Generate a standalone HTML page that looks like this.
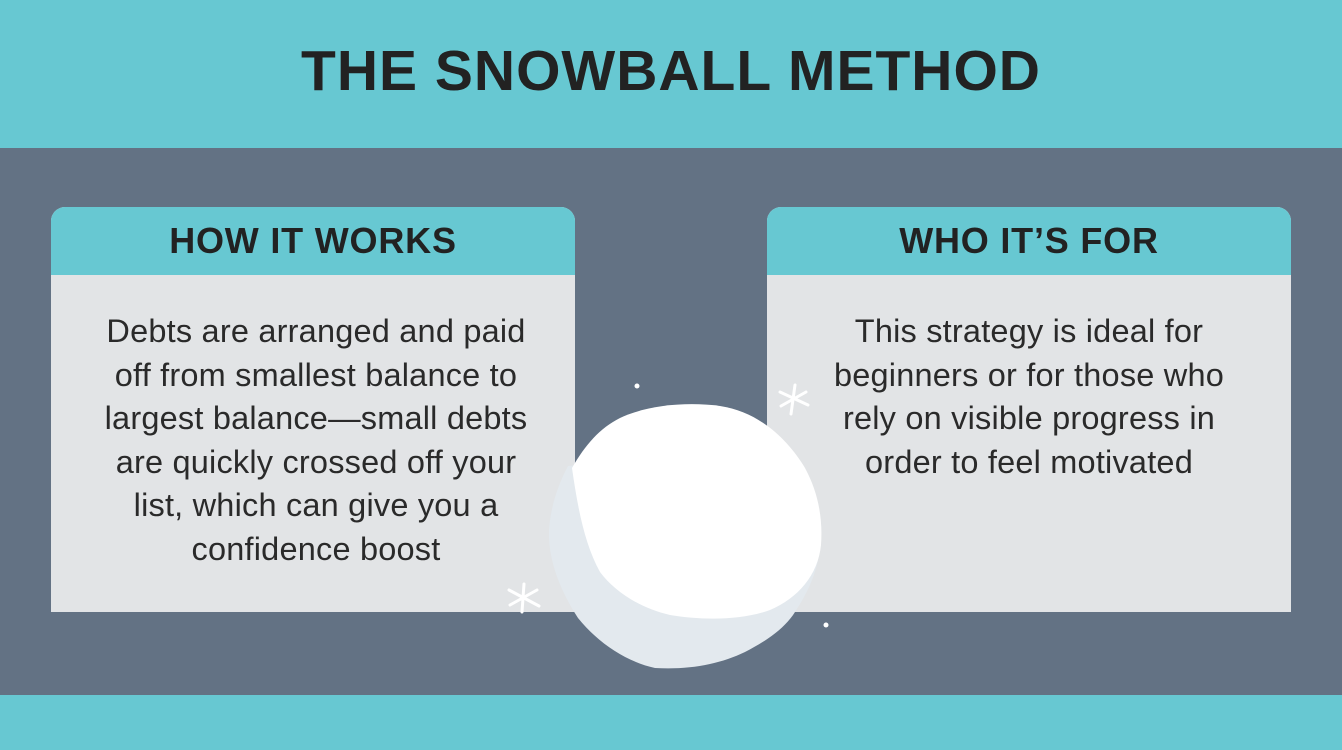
<!DOCTYPE html>
<html><head><meta charset="utf-8"><style>
*{margin:0;padding:0;box-sizing:border-box}
body{width:1342px;height:750px;overflow:hidden;background:#637284;font-family:"Liberation Sans",sans-serif;position:relative;color:#232323}
.top{position:absolute;left:0;top:0;width:1342px;height:148px;background:#67c8d2}
.top h1{position:absolute;left:0;width:1342px;top:38px;text-align:center;font-size:57px;font-weight:bold;letter-spacing:1px;line-height:66px;color:#222}
.bot{position:absolute;left:0;top:695px;width:1342px;height:55px;background:#67c8d2}
.card{position:absolute;top:207px;width:524px;height:405px;background:#e2e4e6;border-radius:14px 14px 0 0;overflow:hidden}
.card .h{height:68px;background:#67c8d2;text-align:center;font-weight:bold;font-size:36px;letter-spacing:0.8px;line-height:68px;color:#222}
.card .b{text-align:center;font-size:32.5px;letter-spacing:0.2px;line-height:43.5px;padding-top:35px;color:#2a2a2a;white-space:nowrap}
</style></head><body>
<div class="top"><h1>THE SNOWBALL METHOD</h1></div>
<div class="card" style="left:51px"><div class="h">HOW IT WORKS</div>
<div class="b" style="padding-left:6px">Debts are arranged and paid<br>off from smallest balance to<br>largest balance—small debts<br>are quickly crossed off your<br>list, which can give you a<br>confidence boost</div></div>
<div class="card" style="left:767px"><div class="h">WHO IT’S FOR</div>
<div class="b">This strategy is ideal for<br>beginners or for those who<br>rely on visible progress in<br>order to feel motivated</div></div>
<svg style="position:absolute;left:0;top:0" width="1342" height="750">
<path fill="#e3e9ee" d="M568,466 C558,485 551,505 549,530 C548,560 560,590 578,618 C600,645 628,662 655,668 C690,670 720,664 745,652 C768,640 785,628 795,612 C808,592 816,575 820,550 L815,500 L640,460 Z"/>
<path fill="#fff" d="M572,468 C585,445 600,428 620,418 C650,404 690,402 720,406 C760,412 788,440 805,468 C818,492 823,518 821,545 C818,575 798,598 770,610 C740,621 700,620 670,615 C640,608 615,592 600,572 C585,545 578,510 572,468 Z"/>
<circle cx="637" cy="386" r="2.5" fill="#fff"/><circle cx="826" cy="625" r="2.5" fill="#fff"/>
<g stroke="#fff" stroke-width="3" stroke-linecap="round">
<path d="M795,385 L791,414 M780,392 L808,405 M781,406 L806,392"/>
<path d="M524,584 L522,612 M509,590 L539,606 M510,605 L537,590"/>
</g>
</svg>
<div class="bot"></div>
</body></html>
